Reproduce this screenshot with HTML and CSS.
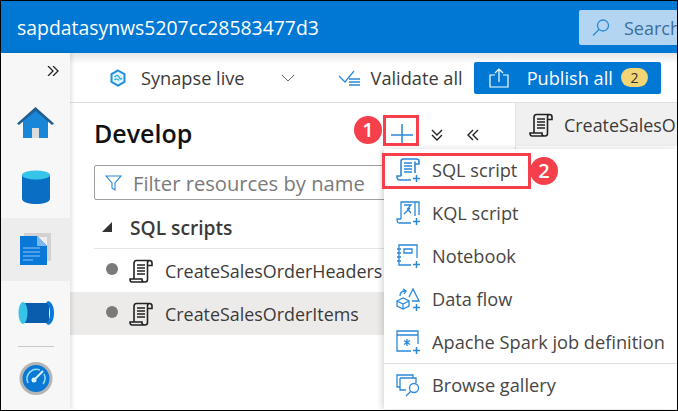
FILE: index.html

```html
<!DOCTYPE html>
<html lang="en">
<head>
  <meta charset="UTF-8" />
  <title>Synapse Studio - Develop</title>
  <link rel="stylesheet" href="styles.css">
</head>
<body>
  <svg class="defs" width="0" height="0">
    <symbol id="scroll" viewBox="0 0 24 24">
      <path d="M5 20V4.500C5 2.500 6 1.500 7.500 1.500H20.500C22 1.500 23 2.500 23 4V6.500H18.500V4C18.500 2.500 19.500 1.500 20.500 1.500M18.500 6.500V20.500C18.500 22 17.500 23 16 23H3C1.500 23 1 21.500 1 20H13V21C13 22.500 14.500 23 16 23M8 6H16M8 9H16M8 12H16M8 15H16" fill="none" stroke="currentColor" stroke-width="1.600"/>
    </symbol>
    <symbol id="add" viewBox="0 0 24 24">
      <path d="M17 20.500H24M20.500 17V24" fill="none" stroke="currentColor" stroke-width="1.500"/>
    </symbol>
    <symbol id="scroll-add" viewBox="0 0 24 24">
      <path d="M5 18V3.500C5 2 6 1 7.500 1H20.500C22 1 23 2 23 3.500V6H19V3.500M19 6V15M5 18H1C1 21 2 22 3.500 22H15M8 5H16M8 8H16M8 11H16M8 14H16" fill="none" stroke="currentColor" stroke-width="1.600"/>
    </symbol>
  </svg>

  <div class="app">
    <header class="topbar">
      <span class="workspace">sapdatasynws5207cc28583477d3</span>
      <div class="search">
        <svg width="20" height="20" viewBox="0 0 20 20" fill="none" stroke="#2b88d8" stroke-width="1.300"><circle cx="12" cy="7.500" r="5.500"/><path d="M8 11.500 2 17.500"/></svg>
        <span>Search</span>
      </div>
    </header>

    <div class="main">
      <nav class="sidebar">
        <div class="expand">
          <svg width="12" height="10" viewBox="0 0 12 10" fill="none" stroke="#222" stroke-width="1.300"><path d="M1 0 6 5 1 10M6 0 11 5 6 10"/></svg>
        </div>
        <div class="nav-item home">
          <svg width="37" height="32" viewBox="0 0 37 32"><path d="M6 14 18.500 3 31 14V31H22V21H15V31H6Z" fill="#1a86d8"/><path d="M15 21H22V31H15Z" fill="#dcdcdc"/><path d="M18.500 0 37 16.500 35 18 18.500 4 2 18 0 16.500Z" fill="#1f5f94"/></svg>
        </div>
        <div class="nav-item db">
          <svg width="30" height="34" viewBox="0 0 30 34"><path d="M1 5V29C1 32 8 34 15 34S29 32 29 29V5Z" fill="#0a6fc4"/><ellipse cx="15" cy="5" rx="14" ry="4.500" fill="#36c5e8"/></svg>
        </div>
        <div class="nav-item active">
          <svg width="31" height="33" viewBox="0 0 31 33"><path d="M4 0H31V28H27V4H4Z" fill="#d2d2d2"/><path d="M0 3H17L27 13V32H0Z" fill="#0a78d8"/><path d="M17 3 27 13H17Z" fill="#7cb9f2"/><path d="M3 15H20M3 19H20M3 23H20M3 27H13" stroke="#8cc4f5" stroke-width="1.200"/></svg>
        </div>
        <div class="nav-item pipe">
          <svg width="36" height="24" viewBox="0 0 36 24"><rect x="5" y="2" width="26" height="20" fill="#0a5cad"/><ellipse cx="5" cy="12" rx="4.500" ry="11" fill="#36c5e8"/><path d="M30 0C34 1 36 6 36 12S34 23 30 24L28 22C31 21 32 16 32 12S31 3 28 2Z" fill="#0a78d4"/></svg>
        </div>
        <div class="nav-divider"></div>
        <div class="nav-item monitor">
          <svg width="36" height="33" viewBox="0 0 36 33"><circle cx="18" cy="16.500" r="15" fill="#0a78d4" stroke="#b5b5b5" stroke-width="3"/><path d="M10 21A9.500 9.500 0 0 1 22 8M26 12A9.500 9.500 0 0 1 25 22" fill="none" stroke="#8fdcf5" stroke-width="1.600"/><path d="M16 18 25 9" stroke="#d8f3fb" stroke-width="2"/><circle cx="16" cy="18" r="2.500" fill="#d8f3fb"/></svg>
        </div>
      </nav>

      <div class="content">
        <div class="toolbar">
          <div class="tool synapse">
            <svg width="18" height="18" viewBox="0 0 18 18"><path d="M9 1.500 15.500 5.200V12.800L9 16.500 2.500 12.800V5.200Z" fill="#e4f4fb" stroke="#1f8fdc" stroke-width="2"/><path d="M5.500 8C7 6 9 6 10 8S12 10.500 13 9M5.500 11C7 9.500 9 10 10 11.500" fill="none" stroke="#35b4d8" stroke-width="1.500"/></svg>
            <span>Synapse live</span>
            <svg class="chevron" width="14" height="8" viewBox="0 0 14 8" fill="none" stroke="#666" stroke-width="1"><path d="M1 1 7 7 13 1"/></svg>
          </div>
          <div class="tool validate">
            <svg width="22" height="16" viewBox="0 0 22 16" fill="none"><path d="M1 6 7 12 16 1" stroke="#2b88d8" stroke-width="1.200"/><path d="M11 9H22M11 12H22M11 15H22" stroke="#2b88d8" stroke-width="1.500"/></svg>
            <span>Validate all</span>
          </div>
          <button class="publish">
            <svg width="20" height="20" viewBox="0 0 20 20" fill="none" stroke="#fff" stroke-width="1.200"><path d="M6 7H1V19H19V7H14M10 14V1M6 5 10 1 14 5"/></svg>
            <span class="publish-label">Publish all</span>
            <span class="badge">2</span>
          </button>
        </div>

        <div class="workarea">
          <section class="develop">
            <div class="develop-head">
              <h2>Develop</h2>
              <div class="head-actions">
                <svg class="plus" width="22" height="22" viewBox="0 0 22 22" stroke="#2b88d8" stroke-width="1.500"><path d="M11 0V22M0 11H22"/></svg>
                <svg width="12" height="12" viewBox="0 0 12 12" fill="none" stroke="#222" stroke-width="1.400"><path d="M1 1 6 6 11 1M1 6 6 11 11 6"/></svg>
                <svg width="12" height="12" viewBox="0 0 12 12" fill="none" stroke="#222" stroke-width="1.400"><path d="M6 1 1 6 6 11M11 1 6 6 11 11"/></svg>
              </div>
            </div>
            <div class="filter">
              <svg width="17" height="16" viewBox="0 0 17 16" fill="none" stroke="#2b88d8" stroke-width="1.100"><path d="M1 1H16L10 8V15L7 13V8Z"/></svg>
              <span>Filter resources by name</span>
            </div>
            <div class="group">
              <span class="caret"></span>
              <span>SQL scripts</span>
            </div>
            <div class="script">
              <span class="dot"></span>
              <svg class="doc" width="24" height="24"><use href="#scroll"/></svg>
              <span>CreateSalesOrderHeaders</span>
            </div>
            <div class="script selected">
              <span class="dot"></span>
              <svg class="doc" width="24" height="24"><use href="#scroll"/></svg>
              <span>CreateSalesOrderItems</span>
            </div>
          </section>
          <section class="tabs">
            <div class="tab">
              <svg class="doc" width="24" height="24"><use href="#scroll"/></svg>
              <span>CreateSalesOrderItems</span>
            </div>
          </section>
        </div>
      </div>
    </div>

    <ul class="menu">
      <li>
        <svg width="24" height="24"><use href="#scroll-add"/><use href="#add"/></svg>
        <span>SQL script</span>
      </li>
      <li>
        <svg width="24" height="24" viewBox="0 0 24 24" fill="none" stroke="currentColor" stroke-width="1.300"><path d="M5 18V1H23V14M19 1V15M5 18H1C1 21 2 22 3.500 22H15M8 4H15L11.500 8 15 12M8 13 14 7"/><path d="M17 20.500H24M20.500 17V24" stroke-width="1.500"/></svg>
        <span>KQL script</span>
      </li>
      <li>
        <svg width="24" height="24" viewBox="0 0 24 24" fill="none" stroke="currentColor" stroke-width="1.300"><path d="M15 21H3V1H21V14M1 5H5M1 9H5M1 13H5M1 17H5M8 5H16V9H8Z"/><path d="M17 20.500H24M20.500 17V24" stroke-width="1.500"/></svg>
        <span>Notebook</span>
      </li>
      <li>
        <svg width="24" height="24" viewBox="0 0 24 24" fill="none" stroke="currentColor" stroke-width="1.300"><path d="M1 14 7 11 13 14V19L7 22 1 19ZM1 14 7 17 13 14M7 17V22M4 9C4 6 6 4 9 4M7 2 10 4 8 7M13 10 17 2 23 14H16"/><path d="M17 20.500H24M20.500 17V24" stroke-width="1.500"/></svg>
        <span>Data flow</span>
      </li>
      <li>
        <svg width="24" height="24" viewBox="0 0 24 24" fill="none" stroke="currentColor" stroke-width="1.300"><path d="M15 21H1V1H22V14M1 5H22M11 9V16M8 10.500 14 14.500M14 10.500 8 14.500"/><path d="M17 20.500H24M20.500 17V24" stroke-width="1.500"/></svg>
        <span>Apache Spark job definition</span>
      </li>
      <li class="menu-sep"></li>
      <li>
        <svg width="24" height="24" viewBox="0 0 24 24" fill="none" stroke="currentColor" stroke-width="1.300"><path d="M4 14H1V2H17V5M4 5H20V10M4 5V17H10"/><circle cx="18" cy="15" r="4.500"/><path d="M14.500 18.500 10 23"/></svg>
        <span>Browse gallery</span>
      </li>
    </ul>

    <div class="callout box-plus"></div>
    <div class="callout box-sql"></div>
    <div class="step step-one">1</div>
    <div class="step step-two">2</div>
  </div>
</body>
</html>
```

FILE: styles.css

```css
* { box-sizing: border-box; }
html, body { margin: 0; height: 100%; overflow: hidden; }
body { font-family: "Open Sans", sans-serif; color: #3b3a39; background: #fff; }
.defs { position: absolute; }

.app { position: relative; width: 678px; height: 411px; display: flex; flex-direction: column; border: 1px solid #000; overflow: hidden; }

/* top bar */
.topbar { flex: 0 0 52px; background: #0078d4; color: #fff; display: flex; align-items: center; justify-content: space-between; padding-left: 16px; }
.workspace { font-size: 19.400px; }
.search { width: 98px; height: 35px; margin-top: 1px; background: #b3d5f1; border-radius: 2px 0 0 2px; display: flex; align-items: center; gap: 13px; padding-left: 12px; color: #3b6f9c; font-size: 18px; white-space: nowrap; overflow: hidden; flex-shrink: 0; }
.search svg { flex-shrink: 0; }

.main { flex: 1; display: flex; min-height: 0; }

/* left nav */
.sidebar { flex: 0 0 69px; background: #f7f7f7; box-shadow: 1px 0 5px rgba(0,0,0,.15); display: flex; flex-direction: column; align-items: center; z-index: 1; }
.expand { height: 34px; width: 100%; display: flex; justify-content: flex-end; padding: 13px 11px 0 0; }
.nav-item { display: flex; align-items: center; justify-content: center; width: 100%; }
.home { height: 72px; }
.db { height: 58px; margin-bottom: 2px; }
.active { height: 64px; background: #ededed; }
.pipe { height: 65px; }
.nav-divider { width: 36px; border-top: 1px solid #c8c8c8; }
.monitor { height: 64px; }

/* toolbar */
.content { flex: 1; display: flex; flex-direction: column; min-width: 0; }
.toolbar { flex: 0 0 50px; display: flex; align-items: center; padding-left: 39px; background: linear-gradient(#e6e6e6, #fff 11px); border-bottom: 1px solid #e1dfdd; font-size: 18.200px; }
.tool { display: flex; align-items: center; }
.synapse span { margin-left: 14px; }
.chevron { margin-left: 36px; }
.validate { margin-left: 43px; gap: 11px; }
.publish { margin-left: 11px; width: 187px; height: 32px; background: #0078d4; border: 0; border-radius: 2px; color: #fff; font: inherit; display: flex; align-items: center; padding: 0 0 0 15px; }
.publish-label { margin-left: 18px; }
.badge { margin-left: 8px; width: 27px; height: 19px; line-height: 19px; border-radius: 10px; background: #f2d675; color: #323130; font-size: 14px; text-align: center; }

.workarea { flex: 1; display: flex; min-height: 0; }

/* develop panel */
.develop { flex: 0 0 446px; border-right: 1px solid #e6e6e6; }
.develop-head { height: 62px; display: flex; align-items: center; justify-content: space-between; padding: 0 36px 0 24px; }
.develop-head h2 { margin: -2px 0 0; font-size: 25px; font-weight: 600; color: #111; }
.head-actions { display: flex; align-items: center; gap: 24px; margin-top: 1px; }
.head-actions svg { flex-shrink: 0; }
.plus { margin-right: -6px; }
.filter { margin-left: 24px; height: 35px; border: 1px solid #a19f9d; border-radius: 2px; display: flex; align-items: center; gap: 11px; padding-left: 10px; color: #7a7a7a; font-size: 20.200px; white-space: nowrap; overflow: hidden; }
.filter svg { flex-shrink: 0; }
.group { height: 49px; margin-left: 24px; display: flex; align-items: center; gap: 18px; padding: 6px 0 0 8px; border-bottom: 1px solid #e6e6e6; font-size: 19.200px; font-weight: 600; }
.caret { width: 0; height: 0; border-style: solid; border-width: 0 0 10px 10px; border-color: transparent transparent #333 transparent; }
.script { height: 43px; display: flex; align-items: center; padding-left: 36px; font-size: 17.900px; white-space: nowrap; overflow: hidden; }
.script.selected { background: #edebe9; }
.dot { width: 12px; height: 12px; border-radius: 50%; background: #7a7a7a; margin-right: 11px; margin-top: -4px; flex-shrink: 0; }
.doc { color: #222; margin-right: 12px; flex-shrink: 0; }

/* open tab */
.tabs { flex: 1; min-width: 0; }
.tab { height: 43px; background: #f0f0f0; display: flex; align-items: center; padding-left: 13px; font-size: 17.900px; white-space: nowrap; overflow: hidden; }
.tab .doc { margin-right: 11px; }

/* new resource menu */
.menu { position: absolute; left: 383px; top: 148px; width: 294px; height: 260px; margin: 0; padding: 0; list-style: none; background: #fff; box-shadow: -2px 0 6px rgba(0,0,0,.16); font-size: 18.200px; color: #484644; }
.menu li { height: 42.800px; display: flex; align-items: center; gap: 12px; padding-left: 12px; white-space: nowrap; }
.menu svg { color: #2b88d8; flex-shrink: 0; }
.menu li.menu-sep { height: 0; border-top: 1px solid #e1dfdd; }

/* annotations */
.callout { position: absolute; border: 3px solid #f5404c; }
.box-plus { left: 382px; top: 114px; width: 36px; height: 31px; }
.box-sql { left: 381px; top: 152px; width: 149px; height: 36px; }
.step { position: absolute; width: 28px; height: 28px; line-height: 28px; border-radius: 50%; background: #f5404c; color: #fff; text-align: center; font-size: 20px; font-weight: 600; }
.step-one { left: 353px; top: 115px; }
.step-two { left: 529px; top: 156px; }
```
